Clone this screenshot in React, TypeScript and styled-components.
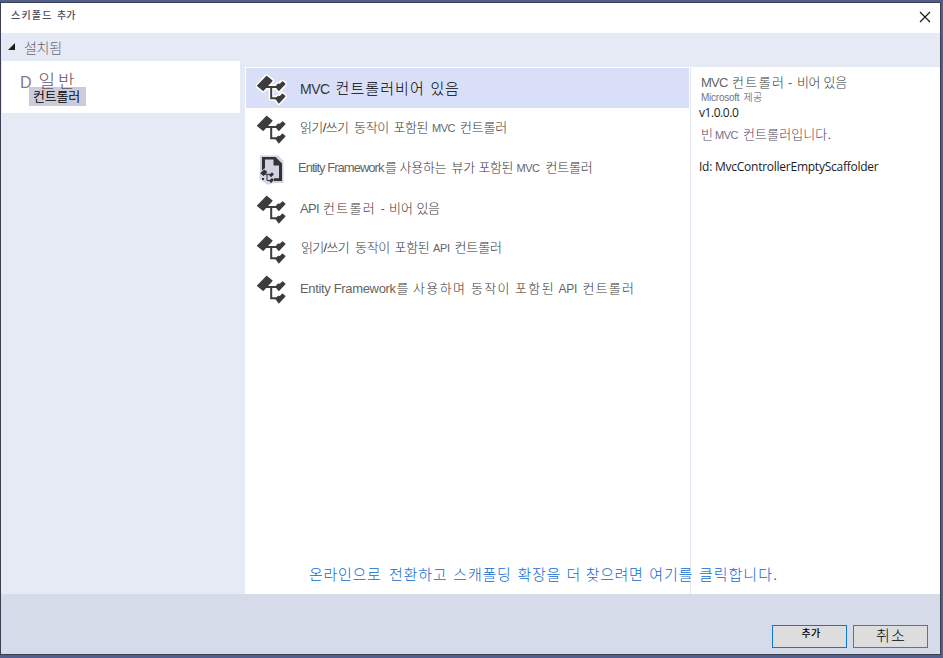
import React from "react";
import styled, { createGlobalStyle } from "styled-components";

type Word = [text: string, slot: number, size: number, spacing: number];

const GlobalStyle = createGlobalStyle`
  * { box-sizing: border-box; }
  body { margin: 0; background: #525e8b; overflow: hidden; }
`;

const Desktop = styled.div`
  width: 943px;
  height: 658px;
  padding-top: 2px;
  background: #525e8b;
  font-family: "Liberation Sans", "Noto Sans CJK KR", sans-serif;
`;

const Dialog = styled.div`
  position: relative;
  display: flex;
  flex-direction: column;
  width: 941px;
  height: 653px;
  border: 1px solid #3b3f52;
  background: #e6eaf5;
`;

const TitleBar = styled.header`
  display: flex;
  justify-content: space-between;
  height: 30px;
  padding: 1px 9px 0 10px;
  background: #fff;
`;

const CloseButton = styled.button`
  width: 12px;
  height: 12px;
  margin-top: 7px;
  padding: 0;
  border: 0;
  background: none;
  svg { display: block; }
`;

const Main = styled.div`
  display: flex;
  height: 561px;
`;

const Sidebar = styled.nav`
  width: 243px;
`;

const GroupHeader = styled.div`
  display: flex;
  height: 28px;
  padding: 10px 0 0 7px;
  gap: 8px;
`;

const Group = styled.div`
  width: 238px;
  height: 52px;
  margin-left: 1px;
  padding: 11px 0 0 18px;
  background: #fff;
`;

const SelectedNode = styled.div`
  width: 57px;
  height: 19px;
  margin: -5px 0 0 9px;
  padding-left: 4px;
  background: #cbccdb;
`;

const ListPane = styled.ul`
  width: 445px;
  margin: 34px 0 0 1px;
  padding: 1px 0 0 1px;
  list-style: none;
  background: #fff;
`;

const ListItem = styled.li<{ $selected?: boolean }>`
  display: flex;
  width: 443px;
  height: 40px;
  padding-left: 10px;
  background: ${(p) => (p.$selected ? "#dadff8" : "transparent")};
  svg { flex: none; margin-top: 6px; }
`;

const DetailPane = styled.section`
  flex: 1;
  margin-top: 34px;
  padding: 6px 0 0 8px;
  border-left: 1px solid #e6e6f5;
  background: #fff;
`;

const Line = styled.div<{ $top?: number; $left?: number; $color?: string; $weight?: number }>`
  display: flex;
  align-items: baseline;
  height: 20px;
  line-height: 20px;
  margin: ${(p) => p.$top ?? 0}px 0 0 ${(p) => p.$left ?? 0}px;
  color: ${(p) => p.$color ?? "#383838"};
  font-weight: ${(p) => p.$weight ?? 300};
  text-align: left;
  white-space: pre;
`;

const Slot = styled.span<{ $w: number; $size: number; $ls: number; $soft: boolean }>`
  flex: none;
  width: ${(p) => p.$w}px;
  font-size: ${(p) => p.$size}px;
  letter-spacing: ${(p) => p.$ls}px;
  opacity: ${(p) => (p.$soft ? 0.78 : 1)};
`;

const Meta = styled.div<{ $top: number; $ls: number }>`
  height: 16px;
  margin-top: ${(p) => p.$top}px;
  font: 400 12px/16px "Open Sans", sans-serif;
  letter-spacing: ${(p) => p.$ls}px;
  color: #1b1b24;
`;

const OnlineLink = styled.a`
  position: absolute;
  left: 308px;
  top: 562px;
`;

const Footer = styled.footer`
  display: flex;
  justify-content: flex-end;
  flex: 1;
  gap: 6px;
  padding: 31px 12px 0 0;
  background: #d5dbe8;
`;

const Button = styled.button<{ $primary?: boolean }>`
  display: flex;
  justify-content: flex-start;
  width: 75px;
  height: 23px;
  padding: 0;
  border: 1px solid ${(p) => (p.$primary ? "#0a78d4" : "#707070")};
  background: #ddd;
  font-family: inherit;
`;

const isLatin = (text: string) => /^[\x20-\x7e]+$/.test(text);

const Words = ({ words }: { words: Word[] }) => (
  <>
    {words.map(([text, slot, size, spacing], i) => (
      <Slot key={i} $w={slot} $size={size} $ls={spacing} $soft={isLatin(text)}>{text}</Slot>
    ))}
  </>
);

const TREE =
  "M10.7 2.4 15.9 6.7 7.2 16.2 1.7 11.7ZM20 12.6 22.2 10.2 24 10.4 26.5 7.9 28.8 10 22.8 16.4ZM20 24.9 22.2 22.5 24 22.7 26.5 20.2 28.8 22.3 22.8 28.7Z";
const LINKS = "M10 13H22M15.2 13V24.3H22";

const ControllerIcon = ({ halo }: { halo?: boolean }) => (
  <svg width="32" height="32" viewBox="0 0 32 32" fill="none">
    {halo && (
      <g stroke="#fff" strokeLinejoin="round">
        <path d={TREE} strokeWidth="4.5" />
        <path d={LINKS} strokeWidth="5" />
      </g>
    )}
    <path d={LINKS} stroke="#3c3c3c" strokeWidth="2" />
    <path d={TREE} fill="#3c3c3c" stroke="#3c3c3c" strokeWidth="1.3" strokeLinejoin="round" />
  </svg>
);

const ViewIcon = () => (
  <svg width="32" height="32" viewBox="0 0 32 32" fill="none">
    <path d="M4 1.5H22L27.5 7V29H17L14 30.5H11L3.5 25V20L4 16Z" fill="#cfd3e4" />
    <path d="M6 3H19.5L26 9.5V27H18V24.3H23V11.5H17.5V5.5H9V14L6 16.5Z" fill="#333" />
    <path d="M8.2 15.5 11.5 18 7.5 22 4.2 19.3ZM13 21 16 18.3 18 20.3 15 23.2ZM13 26.7 16 24 18 26 15 29ZM6 24H8V26H6Z" fill="#333" />
    <path d="M8 20.3H14M11 20.3V26.5H14" stroke="#333" />
  </svg>
);

const ITEMS: { icon: "tree" | "view"; left: number; top: number; words: Word[] }[] = [
  { icon: "tree", left: 12, top: 11, words: [["MVC", 35.5, 14, -0.5], ["컨트롤러비어", 95, 15, 1.1], ["있음", 40, 15, 0.6]] },
  { icon: "tree", left: 12, top: 10, words: [["읽기/쓰기", 54, 13, -0.6], ["동작이", 39.5, 13, -0.3], ["포함된", 38.5, 13, -0.4], ["MVC", 28, 11, -0.5], ["컨트롤러", 60, 13, -0.2]] },
  { icon: "view", left: 10, top: 10, words: [["Entity Framework", 87, 13, -0.98], ["를", 14.5, 13, 0], ["사용하는", 52, 13, -0.2], ["뷰가", 27, 13, -0.3], ["포함된", 38, 13, -0.4], ["MVC", 29, 11, -0.5], ["컨트롤러", 60, 13, -0.2]] },
  { icon: "tree", left: 12, top: 10.5, words: [["API", 23, 13, -0.7], ["컨트롤러", 57.5, 13, 1.3], ["-", 8.5, 13, 0], ["비어", 27.5, 13, 0.1], ["있음", 40, 13, -0.4]] },
  { icon: "tree", left: 13, top: 9.5, words: [["읽기/쓰기", 54, 13, -0.7], ["동작이", 39.5, 13, -0.3], ["포함된", 38.5, 13, -0.3], ["API", 21.5, 11, -0.3], ["컨트롤러", 60, 13, -0.1]] },
  { icon: "tree", left: 12, top: 10.5, words: [["Entity Framework", 96.5, 13, -0.34], ["를", 16.5, 13, 0], ["사용하며", 58, 13, 1.4], ["동작이", 44, 13, 1.3], ["포함된", 43.5, 13, 1.4], ["API", 24, 12, -0.3], ["컨트롤러", 60, 13, 1.2]] },
];

export default function App() {
  return (
    <Desktop>
      <GlobalStyle />
      <Dialog>
        <TitleBar>
          <Line $top={2} $color="#514a5e" $weight={500}>
            <Words words={[["스키폴드", 46, 10, 1.2], ["추가", 22, 10, 0]]} />
          </Line>
          <CloseButton aria-label="닫기">
            <svg width="12" height="12" viewBox="0 0 12 12">
              <path d="M1 1 11 11M11 1 1 11" stroke="#111" strokeWidth="1.1" />
            </svg>
          </CloseButton>
        </TitleBar>
        <Main>
          <Sidebar>
            <GroupHeader>
              <svg width="8" height="8" viewBox="0 0 8 8">
                <path d="M7 0V7H0Z" fill="#1e1e1e" />
              </svg>
              <Line $top={-5} $color="#66666f">
                <Words words={[["설치됨", 60, 14, -0.3]]} />
              </Line>
            </GroupHeader>
            <Group>
              <Line $color="#5d5468">
                <Words words={[["D", 18.5, 16, 0], ["일반", 40, 18, 3]]} />
              </Line>
              <SelectedNode>
                <Line $color="#000" $weight={350}>
                  <Words words={[["컨트롤러", 50, 13, -0.2]]} />
                </Line>
              </SelectedNode>
            </Group>
          </Sidebar>
          <ListPane>
            {ITEMS.map((item, i) => (
              <ListItem key={i} $selected={i === 0}>
                {item.icon === "view" ? <ViewIcon /> : <ControllerIcon halo={i === 0} />}
                <Line $left={item.left} $top={item.top} $color={i === 0 ? "#000" : undefined}>
                  <Words words={item.words} />
                </Line>
              </ListItem>
            ))}
          </ListPane>
          <DetailPane>
            <Line $left={2}>
              <Words words={[["MVC", 31, 13, -0.8], ["컨트롤러", 56, 13, 1.4], ["-", 9, 13, 0], ["비어", 26.5, 13, -0.4], ["있음", 40, 13, -0.2]]} />
            </Line>
            <Line $left={2} $top={-5} $color="#504660">
              <Words words={[["Microsoft", 42.5, 10, -0.25], ["제공", 30, 10, 0.2]]} />
            </Line>
            <Meta $top={-3} $ls={-0.45}>v1.0.0.0</Meta>
            <Line $left={2} $top={4} $color="#504660">
              <Words words={[["빈", 14, 13, 0], ["MVC", 28, 11, -0.5], ["컨트롤러입니다.", 100, 13, 0.1]]} />
            </Line>
            <Meta $top={14} $ls={-0.25}>Id: MvcControllerEmptyScaffolder</Meta>
          </DetailPane>
        </Main>
        <OnlineLink>
          <Line $color="#0d69d2">
            <Words words={[["온라인으로", 80, 15, 0.7], ["전환하고", 64.3, 15, 0.8], ["스캐폴딩", 64.3, 15, 0.8], ["확장을", 49, 15, 0.7], ["더", 19.2, 15, 0], ["찾으려면", 63.5, 15, 0.6], ["여기를", 49.7, 15, 0.8], ["클릭합니다.", 90, 15, 1]]} />
          </Line>
        </OnlineLink>
        <Footer>
          <Button $primary>
            <Line $left={28.5} $top={-2} $color="#000" $weight={500}>
              <Words words={[["추가", 22, 10, 0.3]]} />
            </Line>
          </Button>
          <Button>
            <Line $left={22} $color="#000">
              <Words words={[["취소", 40, 15, 1.2]]} />
            </Line>
          </Button>
        </Footer>
      </Dialog>
    </Desktop>
  );
}
